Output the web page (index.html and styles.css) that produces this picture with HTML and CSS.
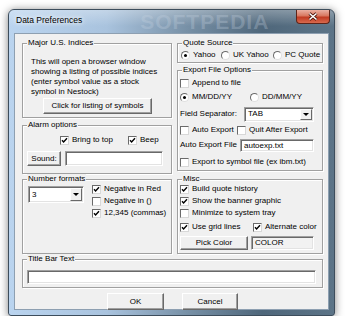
FILE: index.html
```html
<!DOCTYPE html>
<html lang="en">
<head>
    <meta charset="UTF-8">
    <title>Data Preferences</title>
    <link rel="stylesheet" href="styles.css">
</head>
<body>
<div class="window">
    <div class="titlebar">
        <span class="title">Data Preferences</span>
        <span class="mark">SOFTPEDIA</span>
        <span class="close">
            <svg viewBox="0 0 10 9" width="10" height="9"><path d="M1.5 1.5l7 6M8.5 1.5l-7 6" stroke="#4a1208" stroke-width="3"/><path d="M1.5 1.5l7 6M8.5 1.5l-7 6" stroke="#fff" stroke-width="1.6"/></svg>
        </span>
    </div>
    <div class="client">
        <div class="cols">
            <div class="left">
                <div class="group g-major">
                    <span class="cap">Major U.S. Indices</span>
                    <p class="note">This will open a browser window<br>showing a listing of possible indices<br>(enter symbol value as a stock<br>symbol in Nestock)</p>
                    <button class="btn btn-list">Click for listing of symbols</button>
                </div>
                <div class="group g-alarm">
                    <span class="cap">Alarm options</span>
                    <div class="row">
                        <label class="opt opt-bring"><span class="cb on"><svg viewBox="0 0 7 7" width="7" height="7"><path d="M1 3.3l1.6 1.7L6 1.3" fill="none" stroke="#000" stroke-width="1.4"/></svg></span>Bring to top</label>
                        <label class="opt"><span class="cb on"><svg viewBox="0 0 7 7" width="7" height="7"><path d="M1 3.3l1.6 1.7L6 1.3" fill="none" stroke="#000" stroke-width="1.4"/></svg></span>Beep</label>
                    </div>
                    <div class="sound-row">
                        <button class="btn btn-sound">Sound:</button>
                        <span class="field f-sound"></span>
                    </div>
                </div>
                <div class="group g-number">
                    <span class="cap">Number formats</span>
                    <span class="combo c-digits"><span class="combo-text">3</span><span class="drop"></span></span>
                    <div class="checks">
                        <label class="opt line"><span class="cb on"><svg viewBox="0 0 7 7" width="7" height="7"><path d="M1 3.3l1.6 1.7L6 1.3" fill="none" stroke="#000" stroke-width="1.4"/></svg></span>Negative in Red</label>
                        <label class="opt line"><span class="cb"></span>Negative in ()</label>
                        <label class="opt line"><span class="cb on"><svg viewBox="0 0 7 7" width="7" height="7"><path d="M1 3.3l1.6 1.7L6 1.3" fill="none" stroke="#000" stroke-width="1.4"/></svg></span>12,345 (commas)</label>
                    </div>
                </div>
            </div>
            <div class="right">
                <div class="group g-quote">
                    <span class="cap">Quote Source</span>
                    <div class="row">
                        <label class="opt opt-yahoo"><span class="rb on"></span>Yahoo</label>
                        <label class="opt opt-uk"><span class="rb"></span>UK Yahoo</label>
                        <label class="opt"><span class="rb"></span>PC Quote</label>
                    </div>
                </div>
                <div class="group g-export">
                    <span class="cap">Export File Options</span>
                    <div class="row r-a">
                        <label class="opt"><span class="cb"></span>Append to file</label>
                    </div>
                    <div class="row r-b">
                        <label class="opt opt-mm"><span class="rb on"></span>MM/DD/YY</label>
                        <label class="opt"><span class="rb"></span>DD/MM/YY</label>
                    </div>
                    <div class="row r-c">
                        <span class="lbl lbl-sep">Field Separator:</span>
                        <span class="combo c-sep"><span class="combo-text">TAB</span><span class="drop"></span></span>
                    </div>
                    <div class="row r-d">
                        <label class="opt opt-auto"><span class="cb"></span>Auto Export</label>
                        <label class="opt"><span class="cb"></span>Quit After Export</label>
                    </div>
                    <div class="row r-e">
                        <span class="lbl lbl-file">Auto Export File</span>
                        <span class="field f-file">autoexp.txt</span>
                    </div>
                    <div class="row r-f">
                        <label class="opt"><span class="cb"></span>Export to symbol file (ex ibm.txt)</label>
                    </div>
                </div>
                <div class="group g-misc">
                    <span class="cap">Misc</span>
                    <div class="row line">
                        <label class="opt"><span class="cb on"><svg viewBox="0 0 7 7" width="7" height="7"><path d="M1 3.3l1.6 1.7L6 1.3" fill="none" stroke="#000" stroke-width="1.4"/></svg></span>Build quote history</label>
                    </div>
                    <div class="row line">
                        <label class="opt"><span class="cb on"><svg viewBox="0 0 7 7" width="7" height="7"><path d="M1 3.3l1.6 1.7L6 1.3" fill="none" stroke="#000" stroke-width="1.4"/></svg></span>Show the banner graphic</label>
                    </div>
                    <div class="row line">
                        <label class="opt"><span class="cb"></span>Minimize to system tray</label>
                    </div>
                    <div class="row r-grid">
                        <label class="opt opt-grid"><span class="cb on"><svg viewBox="0 0 7 7" width="7" height="7"><path d="M1 3.3l1.6 1.7L6 1.3" fill="none" stroke="#000" stroke-width="1.4"/></svg></span>Use grid lines</label>
                        <label class="opt"><span class="cb on"><svg viewBox="0 0 7 7" width="7" height="7"><path d="M1 3.3l1.6 1.7L6 1.3" fill="none" stroke="#000" stroke-width="1.4"/></svg></span>Alternate color</label>
                    </div>
                    <div class="color-row">
                        <button class="btn btn-pick">Pick Color</button>
                        <span class="field f-color">COLOR</span>
                    </div>
                </div>
            </div>
        </div>
        <div class="group g-titletext">
            <span class="cap">Title Bar Text</span>
            <span class="field f-title"></span>
        </div>
        <div class="actions">
            <button class="btn btn-ok">OK</button>
            <button class="btn btn-cancel">Cancel</button>
        </div>
    </div>
</div>
</body>
</html>
```

FILE: styles.css
```css
body{
    margin: 0;
    background: #fff;
    font-family: "Liberation Sans", Arial, sans-serif;
    font-size: 8px;
    line-height: 10px;
    color: #000;
}

/* window frame */
.window{
    margin: 9px 0 0 8px;
    width: 327px;
    height: 307px;
    box-sizing: border-box;
    border: 1px solid #3d4d5c;
    border-radius: 6px 6px 3px 3px;
    background: linear-gradient(90deg, #bad4ef 0%, #a9c3de 30%, #7790a6 55%, #4f677b 78%, #5c7487 100%);
    box-shadow: 0 1px 8px rgba(0, 0, 0, .5);
    overflow: hidden;
}

.titlebar{
    height: 23px;
    display: flex;
    align-items: flex-start;
    overflow: hidden;
    background: linear-gradient(180deg, rgba(255, 255, 255, .3), rgba(255, 255, 255, 0) 70%);
}

.title{
    margin: 5px 0 0 7px;
    font-size: 8.5px;
    white-space: nowrap;
    text-shadow: 0 0 4px #fff, 0 0 6px #fff;
}

.mark{
    margin: 1px 0 0 58px;
    font-size: 21px;
    line-height: 22px;
    font-weight: bold;
    letter-spacing: 1px;
    color: rgba(200, 212, 226, .3);
    white-space: nowrap;
}

.close{
    margin-left: auto;
    margin-right: 4px;
    flex: none;
    width: 34px;
    height: 14px;
    box-sizing: border-box;
    border: 1px solid #5e2418;
    border-top: none;
    border-radius: 0 0 4px 4px;
    background: linear-gradient(180deg, #eab0a2 0%, #d8775f 45%, #c13b22 55%, #d86a4e 100%);
    display: flex;
    align-items: center;
    justify-content: center;
}

.client{
    margin-left: 5px;
    width: 315px;
    height: 277px;
    box-sizing: border-box;
    border: 1px solid #8d9fb1;
    background: #f0f0f0;
    padding: 9px 5px 0 7px;
}

.cols{
    display: flex;
    gap: 5px;
}

.left{
    width: 150px;
}

.right{
    width: 146px;
}

/* group boxes */
.group{
    position: relative;
    box-sizing: border-box;
    border: 1px solid #a0a0a0;
    box-shadow: inset 1px 1px 0 #fff, 1px 1px 0 #fff;
}

.cap{
    position: absolute;
    top: -6px;
    left: 4px;
    padding: 0 1px;
    background: #f0f0f0;
    white-space: nowrap;
}

.row{
    display: flex;
    align-items: center;
    height: 10px;
}

.line{
    height: 12px;
}

.opt{
    display: flex;
    align-items: center;
    gap: 3px;
    white-space: nowrap;
}

.lbl{
    white-space: nowrap;
}

/* controls */
.cb{
    width: 9px;
    height: 9px;
    flex: none;
    box-sizing: border-box;
    background: #fff;
    border: 1px solid;
    border-color: #6a6a6a #d8d8d8 #d8d8d8 #6a6a6a;
    display: flex;
    align-items: center;
    justify-content: center;
}

.rb{
    width: 9px;
    height: 9px;
    flex: none;
    box-sizing: border-box;
    border-radius: 50%;
    background: #fff;
    border: 1px solid;
    border-color: #6a6a6a #e0e0e0 #e0e0e0 #6a6a6a;
    display: flex;
    align-items: center;
    justify-content: center;
}

.rb.on::after{
    content: "";
    width: 3px;
    height: 3px;
    border-radius: 50%;
    background: #000;
}

.btn{
    font: inherit;
    color: #000;
    padding: 0;
    box-sizing: border-box;
    background: #f0f0f0;
    border: 1px solid;
    border-color: #fff #696969 #696969 #fff;
    box-shadow: inset -1px -1px 0 #a0a0a0;
    display: block;
}

.field{
    box-sizing: border-box;
    display: block;
    background: #fff;
    border: 1px solid;
    border-color: #a0a0a0 #fff #fff #a0a0a0;
    box-shadow: inset 1px 1px 0 #696969, inset -1px -1px 0 #e3e3e3;
    padding: 0 0 0 3px;
    white-space: nowrap;
}

.combo{
    display: flex;
    box-sizing: border-box;
    background: #fff;
    border: 1px solid;
    border-color: #a0a0a0 #fff #fff #a0a0a0;
    box-shadow: inset 1px 1px 0 #696969, inset -1px -1px 0 #e3e3e3;
    padding: 1px;
}

.combo-text{
    flex: 1;
    padding-left: 2px;
    display: flex;
    align-items: center;
}

.drop{
    width: 12px;
    box-sizing: border-box;
    background: #f0f0f0;
    border: 1px solid;
    border-color: #fff #696969 #696969 #fff;
    display: flex;
    align-items: center;
    justify-content: center;
}

.drop::after{
    content: "";
    border-left: 3px solid transparent;
    border-right: 3px solid transparent;
    border-top: 3px solid #000;
}

/* Major U.S. Indices */
.g-major{
    height: 75px;
    padding: 13px 0 0 8px;
}

.note{
    margin: 0;
    white-space: nowrap;
}

.btn-list{
    margin: 1px 0 0 12px;
    width: 109px;
    height: 16px;
}

/* Alarm options */
.g-alarm{
    height: 49px;
    margin-top: 7px;
    padding: 9px 0 0 4px;
}

.opt-bring{
    margin-left: 33px;
    width: 68px;
}

.sound-row{
    display: flex;
    margin-top: 6px;
}

.btn-sound{
    width: 34px;
    height: 15px;
}

.f-sound{
    margin-left: 4px;
    width: 98px;
    height: 15px;
}

/* Number formats */
.g-number{
    height: 75px;
    margin-top: 5px;
    padding: 3px 0 0 5px;
    display: flex;
    align-items: flex-start;
}

.c-digits{
    margin-top: 3px;
    width: 56px;
    height: 17px;
}

.checks{
    margin-left: 8px;
}

/* Quote Source */
.g-quote{
    height: 20px;
    padding: 6px 0 0 3px;
}

.opt-yahoo{
    width: 40px;
}

.opt-uk{
    width: 52px;
}

/* Export File Options */
.g-export{
    height: 101px;
    margin-top: 7px;
    padding: 5px 0 0 2px;
}

.r-a{ height: 14px; }
.r-b{ height: 14px; }
.r-c{ height: 20px; }
.r-d{ height: 12px; }
.r-e{ height: 18px; }
.r-f{ height: 16px; }

.opt-mm{
    width: 70px;
}

.lbl-sep{
    width: 64px;
}

.c-sep{
    width: 70px;
    height: 15px;
}

.opt-auto{
    width: 57px;
}

.lbl-file{
    width: 60px;
}

.f-file{
    width: 74px;
    height: 13px;
    line-height: 11px;
}

/* Misc */
.g-misc{
    height: 75px;
    margin-top: 8px;
    padding: 3px 0 0 2px;
}

.r-grid{
    height: 16px;
}

.opt-grid{
    width: 73px;
}

.color-row{
    display: flex;
    margin-top: 1px;
}

.btn-pick{
    width: 68px;
    height: 14px;
}

.f-color{
    margin-left: 3px;
    width: 63px;
    height: 14px;
    line-height: 12px;
    background: #f2f2f2;
}

/* Title Bar Text */
.g-titletext{
    height: 29px;
    margin-top: 5px;
    padding: 10px 0 0 4px;
}

.f-title{
    width: 289px;
    height: 14px;
}

.actions{
    display: flex;
    justify-content: center;
    gap: 18px;
    margin-top: 5px;
}

.btn-ok{
    width: 57px;
    height: 17px;
}

.btn-cancel{
    width: 56px;
    height: 17px;
}
```
